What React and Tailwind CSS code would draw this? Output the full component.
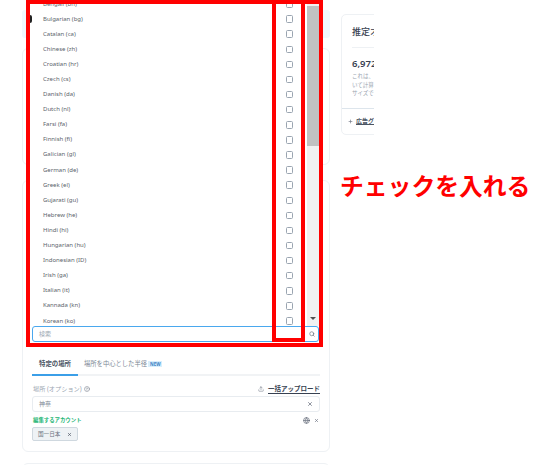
import React from 'react'
import { Search, X, CircleHelp, Upload, Globe, Plus } from 'lucide-react'

const languages = [
  'Bengali (bn)', 'Bulgarian (bg)', 'Catalan (ca)', 'Chinese (zh)', 'Croatian (hr)', 'Czech (cs)',
  'Danish (da)', 'Dutch (nl)', 'Farsi (fa)', 'Finnish (fi)', 'Galician (gl)', 'German (de)',
  'Greek (el)', 'Gujarati (gu)', 'Hebrew (he)', 'Hindi (hi)', 'Hungarian (hu)', 'Indonesian (ID)',
  'Irish (ga)', 'Italian (it)', 'Kannada (kn)', 'Korean (ko)',
]

const font = "font-['Noto_Sans','Noto_Sans_CJK_JP',sans-serif]"

const LanguageDropdown = () => (
  <div className="absolute left-[26px] top-0 w-[297px] h-[347px] bg-white flex flex-col pl-[6px] pr-[4px] pt-[4px] pb-[5px]">
    <div className="flex flex-1 min-h-0 overflow-hidden">
      <ul className="flex-1 -mt-[7.5px]">
        {languages.map(lang => (
          <li key={lang} className="h-[15.1px] flex items-center justify-between pl-[11px] pr-[14px]">
            <span className="text-[6px] text-[#5b636b]">{lang}</span>
            <span className="w-[7.5px] h-[7.5px] rounded-[1.5px] border border-[#9aa5b1] bg-white" />
          </li>
        ))}
      </ul>
      <div className="w-[12px] bg-[#f1f1f1] flex flex-col items-center justify-between pt-[2px] pb-[6px]">
        <div className="w-full h-[140px] bg-[#c1c1c1]" />
        <div className="w-0 h-0 border-x-[3.5px] border-x-transparent border-t-[3.5px] border-t-[#505050]" />
      </div>
    </div>
    <div className="h-[16px] shrink-0 rounded-[3px] border-[1.5px] border-[#4aa8ee] flex items-center justify-between pl-[6px] pr-[3px]">
      <span className="text-[6px] text-[#9aa5b1]">検索</span>
      <Search size={6} strokeWidth={2.5} className="text-[#5f6b76]" />
    </div>
  </div>
)

const EstimateCard = () => (
  <div className="w-[60px] h-[121px] mt-[14px] ml-[11px] rounded-[5px] border border-[#eef1f4] shrink-0 flex flex-col">
    <div className="w-[120px] mx-[10px] h-[33px] border-b border-[#eef1f4] flex items-center">
      <span className="text-[9px] font-medium text-[#374151] pt-[2px]">推定オーディエンス</span>
    </div>
    <div className="w-[160px] pl-[10px] pt-[10px] flex-1">
      <p className="text-[9.5px] font-semibold leading-[12px] text-[#374151]">6,972,000</p>
      <p className="text-[5.5px] leading-[8.5px] mt-[2px] text-[#9aa5b1]">これは、ターゲティングに基づ<br />いて計算された推定オーディ<br />サイズです</p>
    </div>
    <div className="w-[160px] h-[26px] border-t border-[#dde5ec] flex items-center pl-[6px] gap-[3px]">
      <Plus size={5} strokeWidth={3} className="text-[#6b7280]" />
      <span className="text-[6px] font-semibold text-[#4b5563] underline underline-offset-1">広告グループを追加</span>
    </div>
  </div>
)

const LocationCard = () => (
  <div className="h-[272px] mt-[15px] rounded-[6px] border border-[#eef1f4] flex flex-col justify-end pl-[9px] pr-[9px] pb-[10px]">
    <div className="flex items-center border-b-2 border-[#f1f3f5] h-[22px]">
      <div className="w-[46px] h-[22px] -mb-[2px] border-b-2 border-[#3b9fe8] flex items-center justify-center">
        <span className="text-[6.4px] font-semibold text-[#4b5563]">特定の場所</span>
      </div>
      <span className="ml-[6px] text-[6.3px] text-[#7b8794]">場所を中心とした半径</span>
      <span className="ml-[1.5px] px-[1.5px] bg-[#d9eefc] text-[4.5px] font-bold text-[#3b82c4]">NEW</span>
    </div>
    <div className="flex items-center justify-between mt-[6px] h-[14px]">
      <div className="flex items-center gap-[2px] pl-[1px]">
        <span className="text-[6.2px] text-[#9aa5b1]">場所 (オプション)</span>
        <CircleHelp size={6} className="text-[#6b7280]" />
      </div>
      <div className="flex items-center gap-[4px]">
        <Upload size={6} className="text-[#6b7280]" />
        <span className="text-[6.5px] font-semibold text-[#374151] border-b border-[#374151] leading-[9px]">一括アップロード</span>
      </div>
    </div>
    <div className="h-[16px] rounded-[3px] border-[1.5px] border-[#e8ecf0] flex items-center justify-between pl-[6px] pr-[6px]">
      <span className="text-[6px] text-[#7b8794]">神奈</span>
      <X size={6} strokeWidth={3} className="text-[#6b7280]" />
    </div>
    <div className="flex items-center justify-between mt-[3px] h-[10px] pr-[1px] pl-[1px]">
      <span className="text-[5.4px] font-bold text-[#22b573]">編集するアカウント</span>
      <div className="flex items-center gap-[4px]">
        <Globe size={7} strokeWidth={2.5} className="text-[#6b7280]" />
        <X size={5} strokeWidth={3} className="text-[#6b7280]" />
      </div>
    </div>
    <div className="mt-[2px] w-[46px] h-[14px] rounded-[2px] border-[1.5px] border-[#cfd8df] bg-[#eef2f5] flex items-center justify-between pl-[5px] pr-[5px]">
      <span className="text-[5.6px] text-[#6b7280]">国一日本</span>
      <X size={5} strokeWidth={3} className="text-[#4b5563]" />
    </div>
  </div>
)

const App = () => (
  <div className={`relative w-[540px] h-[465px] overflow-hidden bg-white ${font}`}>
    <div className="w-[374px] h-[465px] overflow-hidden flex">
      <div className="w-[308px] ml-[22px] shrink-0">
        <div className="h-[28px] mt-[10px] bg-[#eff8fd] rounded-[3px]" />
        <div className="h-[117px] mt-[10px] rounded-[6px] border border-[#eef1f4]" />
        <LocationCard />
        <div className="h-[20px] mt-[11px] rounded-[6px] border border-[#eef1f4]" />
      </div>
      <EstimateCard />
    </div>

    <LanguageDropdown />
    <div className="absolute left-[30px] top-[15px] w-[2px] h-[8px] rounded-r-full bg-[#222]" />

    <div className="absolute left-[26px] top-0 w-[297px] h-[347px] border-4 border-[#ff0000]" />
    <div className="absolute left-[272px] top-0 w-[33px] h-[342px] border-4 border-[#ff0000]" />
    <span className="absolute left-[340px] top-[169px] text-[23.8px] leading-[32px] font-bold text-[#ff0000] whitespace-nowrap font-['Noto_Sans_CJK_JP',sans-serif]">チェックを入れる</span>
  </div>
)

export default App
